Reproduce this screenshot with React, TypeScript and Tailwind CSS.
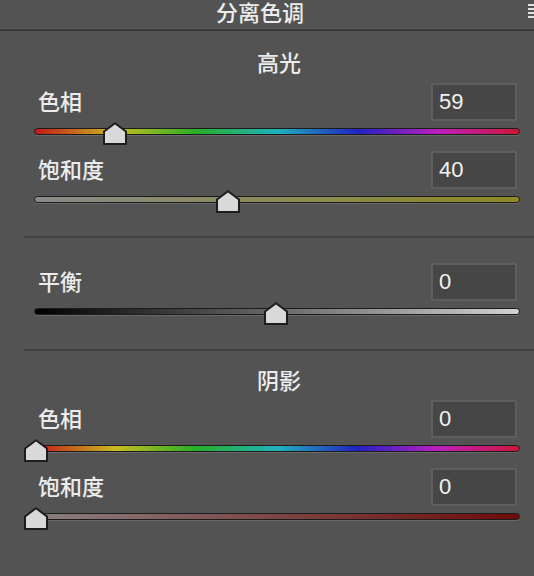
const cjk = { fontFamily: '"PingFang SC", "Noto Sans CJK SC", "Noto Sans", sans-serif' };
const num = { fontFamily: '"Liberation Sans", Arial, sans-serif' };

type Row = {
  label: string;
  value: string;
  frac: number;
  track: string;
};

function Thumb({ frac }: { frac: number }) {
  return (
    <svg
      className="absolute top-[1px]"
      style={{ left: frac * 480 }}
      width="24"
      height="23"
      viewBox="0 0 24 23"
    >
      <polygon
        points="12,1.2 23,9.5 23,22 1,22 1,9.5"
        fill="#d9d9d9"
        stroke="#1d1d1d"
        strokeWidth="2"
        strokeLinejoin="round"
      />
    </svg>
  );
}

function SliderRow({ row }: { row: Row }) {
  return (
    <div className="flex flex-col">
      <div className="flex h-[38px] items-center justify-between pl-[14px] pr-[17px]">
        <span className="mb-[4px] text-[22px] font-medium leading-[26px] text-[#ececec]" style={cjk}>
          {row.label}
        </span>
        <div className="flex h-[38px] w-[86px] items-center border-2 border-[#5e5e5e] bg-[#464646] pl-[6px]">
          <span className="text-[22px] leading-none text-[#f2f2f2]" style={num}>
            {row.value}
          </span>
        </div>
      </div>
      <div className="relative h-[30px]">
        <div
          className={
            "ml-[10px] mr-[14px] mt-[7px] h-[7px] rounded-full border border-[#1c1c1c] shadow-[0_1px_0_rgba(255,255,255,0.13)] " +
            row.track
          }
        />
        <Thumb frac={row.frac} />
      </div>
    </div>
  );
}

function SectionTitle({ text }: { text: string }) {
  return (
    <div className="flex h-[28px] items-center justify-center">
      <span className="text-[22px] font-medium leading-[26px] text-[#ececec]" style={cjk}>
        {text}
      </span>
    </div>
  );
}

const hue =
  "bg-[linear-gradient(90deg,#c41818_0%,#c8bc20_16.7%,#28ae28_33.3%,#20b2bc_50%,#2222c2_66.7%,#bc20bc_83.3%,#cc1838_100%)]";

const highlights: Row[] = [
  { label: "色相", value: "59", frac: 59 / 360, track: hue },
  {
    label: "饱和度",
    value: "40",
    frac: 0.4,
    track: "bg-[linear-gradient(90deg,#8a8a8a,#8c8a24)]",
  },
];

const balance: Row = {
  label: "平衡",
  value: "0",
  frac: 0.5,
  track: "bg-[linear-gradient(90deg,#000000,#d2d2d2)]",
};

const shadows: Row[] = [
  { label: "色相", value: "0", frac: 0, track: hue },
  {
    label: "饱和度",
    value: "0",
    frac: 0,
    track: "bg-[linear-gradient(90deg,#8a8080,#700a0a)]",
  },
];

export default function App() {
  return (
    <div className="flex h-[576px] w-[534px] flex-col overflow-hidden bg-[#535353]">
      {/* panel header */}
      <div className="relative flex h-[28px] items-start justify-center pr-[14px]">
        <span className="text-[22px] font-medium leading-[22px] text-[#ececec]" style={cjk}>
          分离色调
        </span>
        <div className="absolute right-0 top-[4px] flex w-[6px] flex-col gap-[2px]">
          <div className="h-[2px] bg-[#e0e0e0]" />
          <div className="h-[2px] bg-[#e0e0e0]" />
          <div className="h-[2px] bg-[#e0e0e0]" />
          <div className="h-[2px] bg-[#e0e0e0]" />
        </div>
      </div>
      <div className="h-[1px] bg-[#5b5b5b]" />
      <div className="h-[2px] bg-[#3a3a3a]" />

      <div className="ml-[24px] flex flex-col">
        <div className="mt-[16px] mb-[8px]">
          <SectionTitle text="高光" />
        </div>
        {highlights.map((r) => (
          <SliderRow key={r.label} row={r} />
        ))}

        <div className="mt-[17px] h-[2px] bg-[#404040]" />

        <div className="mt-[25px]">
          <SliderRow row={balance} />
        </div>

        <div className="mt-[18px] h-[2px] bg-[#404040]" />

        <div className="mt-[14px] mb-[7px]">
          <SectionTitle text="阴影" />
        </div>
        {shadows.map((r) => (
          <SliderRow key={r.label} row={r} />
        ))}
      </div>
    </div>
  );
}
